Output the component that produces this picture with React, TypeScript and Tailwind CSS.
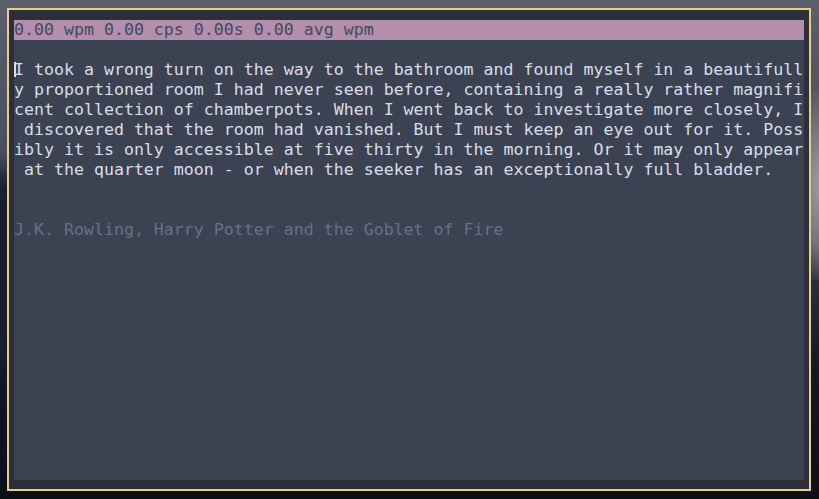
const lines = [
  'I took a wrong turn on the way to the bathroom and found myself in a beautifull',
  'y proportioned room I had never seen before, containing a really rather magnifi',
  'cent collection of chamberpots. When I went back to investigate more closely, I',
  ' discovered that the room had vanished. But I must keep an eye out for it. Poss',
  'ibly it is only accessible at five thirty in the morning. Or it may only appear',
  ' at the quarter moon - or when the seeker has an exceptionally full bladder.',
];

export default function App() {
  return (
    <div className="relative flex h-[499px] w-[819px] items-start overflow-hidden bg-[linear-gradient(180deg,#5a5f6b_0%,#4a4f5c_30%,#2a2f3c_55%,#121724_75%,#0b0f1a_100%)] pl-[7px] pt-[8px]">
      {/* wallpaper rock on the right edge */}
      <div className="absolute left-[790px] top-[90px] h-[190px] w-[60px] rounded-[40%] bg-[radial-gradient(ellipse_at_center,#9a9ea6_0%,#6f747e_45%,transparent_75%)]" />
      <div className="absolute -left-[40px] top-[170px] h-[200px] w-[80px] rounded-full bg-[#1a1f2b] blur-md" />

      {/* terminal window */}
      <div className="relative flex h-[483px] w-[804px] flex-col border-2 border-[#ebcb8b] bg-[#2b2f3a] pb-[9px] pl-[5px] pr-[5px] pt-[10px]">
        <div className="flex flex-1 flex-col bg-[#3b4252] font-['DejaVu_Sans_Mono',monospace] text-[16.6px] leading-[20px] text-[#d8dee9]">
          <div className="mb-[20px] h-[20px] whitespace-pre bg-[#b48ead] text-[#434a5a]">
            0.00 wpm 0.00 cps 0.00s 0.00 avg wpm
          </div>
          <div className="flex flex-col">
            {lines.map((line, i) => (
              <div key={i} className="relative h-[20px] whitespace-pre">
                {i === 0 && (
                  <span className="absolute left-0 top-[2px] h-[15px] w-[2px] bg-[#d8dee9]" />
                )}
                {line}
              </div>
            ))}
          </div>
          <div className="mt-[40px] h-[20px] whitespace-pre text-[#687184]">
            J.K. Rowling, Harry Potter and the Goblet of Fire
          </div>
        </div>
      </div>
    </div>
  );
}
